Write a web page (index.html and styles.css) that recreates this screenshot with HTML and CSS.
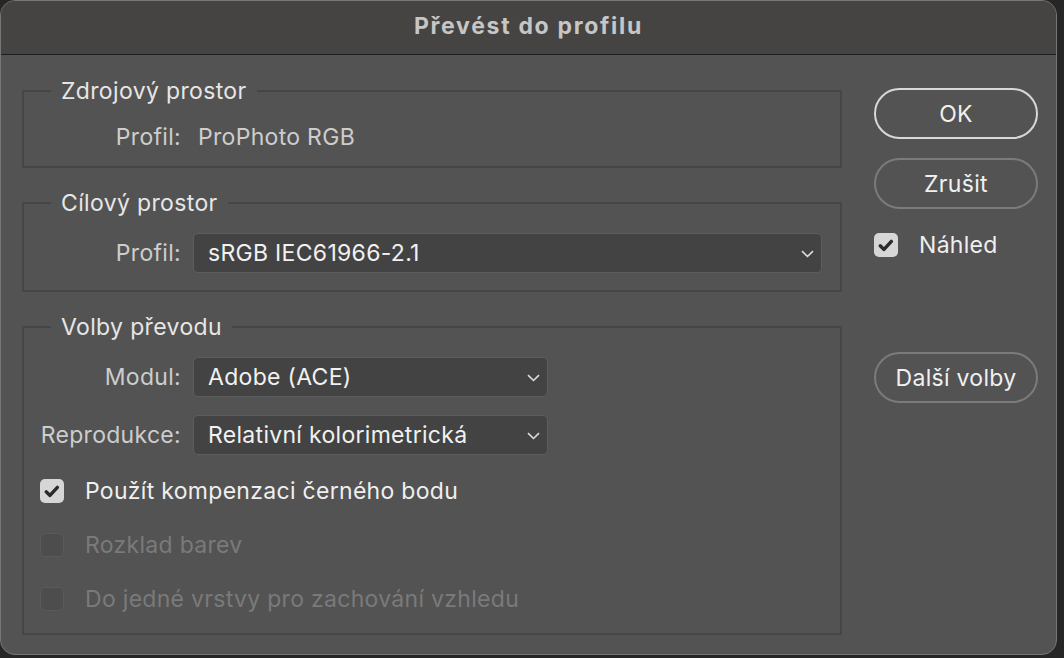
FILE: index.html
```html
<!DOCTYPE html>
<html lang="cs">
<head>
<meta charset="UTF-8">
<meta name="viewport" content="width=device-width, initial-scale=1.0">
<title>Převést do profilu</title>
<link rel="stylesheet" href="styles.css">
</head>
<body>

<div class="dialog">
    <div class="titlebar">Převést do profilu</div>
    <div class="content">
        <div class="main">
            <fieldset class="group g-source">
                <legend>Zdrojový prostor</legend>
                <div class="row">
                    <span class="lbl">Profil:</span>
                    <span class="value">ProPhoto RGB</span>
                </div>
            </fieldset>

            <fieldset class="group g-target">
                <legend>Cílový prostor</legend>
                <div class="row">
                    <span class="lbl">Profil:</span>
                    <div class="select wide">
                        <span>sRGB IEC61966-2.1</span>
                        <svg class="chev" width="13" height="8" viewBox="0 0 13 8"><path d="M1 1.2 L6.5 6.5 L12 1.2" fill="none" stroke="#dcdcdc" stroke-width="1.6"/></svg>
                    </div>
                </div>
            </fieldset>

            <fieldset class="group g-options">
                <legend>Volby převodu</legend>
                <div class="row">
                    <span class="lbl">Modul:</span>
                    <div class="select">
                        <span>Adobe (ACE)</span>
                        <svg class="chev" width="13" height="8" viewBox="0 0 13 8"><path d="M1 1.2 L6.5 6.5 L12 1.2" fill="none" stroke="#dcdcdc" stroke-width="1.6"/></svg>
                    </div>
                </div>
                <div class="row row-gap">
                    <span class="lbl">Reprodukce:</span>
                    <div class="select">
                        <span>Relativní kolorimetrická</span>
                        <svg class="chev" width="13" height="8" viewBox="0 0 13 8"><path d="M1 1.2 L6.5 6.5 L12 1.2" fill="none" stroke="#dcdcdc" stroke-width="1.6"/></svg>
                    </div>
                </div>

                <div class="check first">
                    <span class="box on">
                        <svg width="24" height="24" viewBox="0 0 24 24"><path d="M6.2 12.8 L10 16.4 L17.4 8.4" fill="none" stroke="#2b2b2b" stroke-width="3.4" stroke-linecap="round" stroke-linejoin="round"/></svg>
                    </span>
                    <span>Použít kompenzaci černého bodu</span>
                </div>
                <div class="check disabled">
                    <span class="box"></span>
                    <span>Rozklad barev</span>
                </div>
                <div class="check disabled">
                    <span class="box"></span>
                    <span>Do jedné vrstvy pro zachování vzhledu</span>
                </div>
            </fieldset>
        </div>

        <div class="side">
            <button class="btn default">OK</button>
            <button class="btn cancel">Zrušit</button>
            <div class="check preview">
                <span class="box on">
                    <svg width="24" height="24" viewBox="0 0 24 24"><path d="M6.2 12.8 L10 16.4 L17.4 8.4" fill="none" stroke="#2b2b2b" stroke-width="3.4" stroke-linecap="round" stroke-linejoin="round"/></svg>
                </span>
                <span>Náhled</span>
            </div>
            <button class="btn more">Další volby</button>
        </div>
    </div>
</div>

</body>
</html>
```

FILE: styles.css
```css
body {
    margin: 0;
    padding: 0;
    background-color: #262626;
    font-family: Inter, "Liberation Sans", sans-serif;
}
.dialog {
    box-sizing: border-box;
    width: 1057px;
    height: 655px;
    background-color: #535353;
    border: 1px solid #767676;
    border-radius: 15px;
    overflow: hidden;
}
.titlebar {
    height: 53px;
    line-height: 50px;
    background-color: #454443;
    border-bottom: 1px solid #1d1d1d;
    text-align: center;
    color: #c6c6c6;
    font-size: 23px;
    font-weight: bold;
    letter-spacing: 1.7px;
}
.content {
    display: flex;
    gap: 32px;
    padding: 24px 0 0 21px;
}
.main {
    width: 820px;
}

/* group boxes */
.group {
    margin: 0;
    border: 2px solid #464646;
    padding: 22px 18px 17px 16px;
    min-width: 0;
}
.group legend {
    margin-left: 11px;
    padding: 0 10px;
    font-size: 23px;
    line-height: 24px;
    letter-spacing: 0.35px;
    color: #e6e6e6;
}
.g-target, .g-options {
    margin-top: 23px;
    padding-top: 18px;
}
.g-options {
    padding-bottom: 22px;
}

.row {
    display: flex;
    align-items: center;
    gap: 12px;
    font-size: 23px;
    line-height: 24px;
    letter-spacing: 0.3px;
}
.row-gap {
    margin-top: 18px;
}
.lbl {
    width: 141px;
    text-align: right;
    color: #cdcdcd;
}
.value {
    padding-left: 5px;
    color: #cdcdcd;
}

.select {
    box-sizing: border-box;
    display: flex;
    align-items: center;
    justify-content: space-between;
    width: 355px;
    height: 40px;
    padding: 0 7px 0 14px;
    background-color: #434343;
    border: 1px solid #5d5d5d;
    border-radius: 5px;
    color: #f1f1f1;
}
.select.wide {
    flex: 1;
}
.chev {
    margin-top: 2px;
}

/* checkboxes */
.check {
    display: flex;
    align-items: center;
    gap: 21px;
    font-size: 23px;
    line-height: 24px;
    letter-spacing: 0.3px;
    color: #efefef;
    margin-top: 30px;
}
.check.first {
    margin-top: 24px;
}
.check.disabled {
    color: #7a7a7a;
}
.box {
    box-sizing: border-box;
    flex: none;
    width: 24px;
    height: 24px;
    border-radius: 5px;
    background-color: #4d4d4d;
    border: 1px solid #5a5a5a;
}
.box.on {
    background-color: #d6d6d6;
    border: none;
}
.box svg {
    display: block;
}

/* buttons */
.side {
    width: 164px;
    margin-top: 9px;
    display: flex;
    flex-direction: column;
}
.btn {
    height: 51px;
    width: 164px;
    background: transparent;
    border: 2px solid #7b7b7b;
    border-radius: 26px;
    color: #f0f0f0;
    font-family: inherit;
    font-size: 23px;
    letter-spacing: 0.3px;
}
.btn.default {
    border-color: #d8d8d8;
}
.btn.cancel {
    margin-top: 19px;
}
.check.preview {
    margin-top: 24px;
}
.btn.more {
    margin-top: 95px;
}
```
